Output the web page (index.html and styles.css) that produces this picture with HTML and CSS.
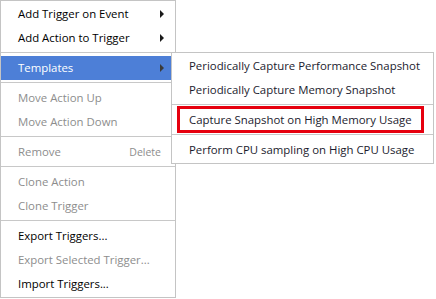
FILE: index.html
```html
<!DOCTYPE html>
<html>
<head>
    <meta charset="UTF-8">
    <meta name="viewport" content="width=device-width, initial-scale=1.0">
    <title>Trigger menu</title>
    <link rel="stylesheet" href="styles.css">
</head>
<body>
    <div class="menu">
        <div class="item">Add Trigger on Event<span class="arrow"></span></div>
        <div class="item">Add Action to Trigger<span class="arrow"></span></div>
        <div class="sep"></div>
        <div class="item active">Templates<span class="arrow"></span></div>
        <div class="sep"></div>
        <div class="item disabled">Move Action Up</div>
        <div class="item disabled">Move Action Down</div>
        <div class="sep"></div>
        <div class="item disabled">Remove<span class="shortcut">Delete</span></div>
        <div class="sep"></div>
        <div class="item disabled">Clone Action</div>
        <div class="item disabled">Clone Trigger</div>
        <div class="sep"></div>
        <div class="item">Export Triggers...</div>
        <div class="item disabled">Export Selected Trigger...</div>
        <div class="item">Import Triggers...</div>

        <!-- submenu of Templates -->
        <div class="menu submenu">
            <div class="item">Periodically Capture Performance Snapshot</div>
            <div class="item">Periodically Capture Memory Snapshot</div>
            <div class="sep"></div>
            <div class="item marked">Capture Snapshot on High Memory Usage</div>
            <div class="sep"></div>
            <div class="item">Perform CPU sampling on High CPU Usage</div>
        </div>
    </div>
</body>
</html>
```

FILE: styles.css
```css
body {
    margin: 0;
    background: #fff;
    font-family: "Open Sans", "Noto Sans", Arial, sans-serif;
    font-size: 11.4px;
    color: #000;
}

.menu {
    position: relative;
    width: 176px;
    box-sizing: border-box;
    border: 1px solid #c4c4c4;
    padding: 1px 0;
    background: #fff;
}

.item {
    position: relative;
    height: 24px;
    line-height: 24px;
    padding-left: 17px;
    white-space: nowrap;
}

.item.disabled {
    color: #8d8d8d;
}

.item.active {
    background: #4d7fd7;
    color: #fff;
}

.sep {
    height: 1px;
    margin: 2px 0 3px;
    background: #c8c8c8;
}

/* small triangle for items with a submenu */
.arrow {
    position: absolute;
    left: 159px;
    top: 8px;
    width: 0;
    height: 0;
    border-top: 4px solid transparent;
    border-bottom: 4px solid transparent;
    border-left: 4px solid #1a1a1a;
}

.item.active .arrow {
    border-left-color: #3a3a3a;
}

.shortcut {
    position: absolute;
    right: 14px;
    font-size: 10.5px;
    color: #8d8d8d;
}

.submenu {
    position: absolute;
    left: 170px;
    top: 51px;
    width: 263px;
}

.submenu .item {
    color: #1b1b2e;
}

/* red box drawn round the chosen template */
.item.marked {
    height: 27px;
    box-sizing: border-box;
    line-height: 21px;
    margin: -2px 9px -1px 5px;
    padding-left: 9px;
    border: 3px solid #e6000f;
}
```
